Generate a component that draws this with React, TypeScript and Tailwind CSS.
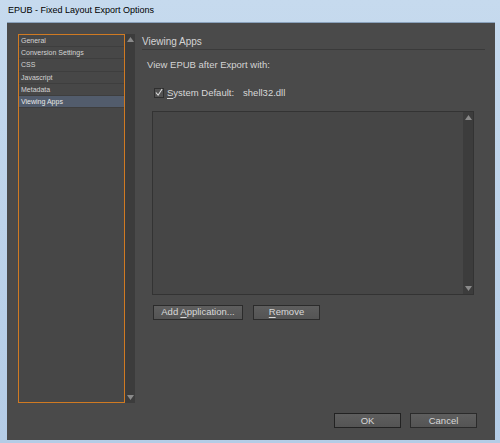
import React from 'react';

const navItems = ['General', 'Conversion Settings', 'CSS', 'Javascript', 'Metadata', 'Viewing Apps'];

function Arrow({ dir }: { dir: 'up' | 'down' }) {
  return (
    <svg width="7" height="5" viewBox="0 0 7 5" className="block">
      {dir === 'up' ? <polygon points="0,5 7,5 3.5,0" fill="#8a8a8a" /> : <polygon points="0,0 7,0 3.5,5" fill="#8a8a8a" />}
    </svg>
  );
}

function ScrollTrack({ className }: { className: string }) {
  return (
    <div className={`flex flex-col items-center justify-between bg-[#3c3c3c] py-[3px] ${className}`}>
      <Arrow dir="up" />
      <Arrow dir="down" />
    </div>
  );
}

function Button({ children, className }: { children: React.ReactNode; className: string }) {
  return (
    <div
      className={`flex h-[15px] items-center justify-center border border-[#2b2b2b] bg-gradient-to-b from-[#5e5e5e] to-[#545454] text-[9.5px] leading-none text-[#d8d8d8] ${className}`}
    >
      <span>{children}</span>
    </div>
  );
}

export default function App() {
  return (
    <div
      className="flex h-[443px] w-[500px] flex-col bg-gradient-to-b from-[#c6daee] to-[#b4cce6] pl-[7px] pr-[5px] pb-[3px]"
      style={{ fontFamily: '"Liberation Sans", Arial, sans-serif' }}
    >
      {/* Title bar */}
      <div className="flex h-[22px] items-center pl-[1px] text-[9px] text-black">
        EPUB - Fixed Layout Export Options
      </div>

      {/* Dialog body */}
      <div className="flex flex-1 flex-col border-t border-[#8aa2bc] bg-[#4a4a4a] pl-[11px] pr-[10px] pt-[11px] pb-[12px]">
        <div className="flex h-[369px]">
          {/* Category list */}
          <div className="flex w-[117px]">
            <div className="flex w-[107px] flex-col border border-[#d07a22] bg-[#474747]">
              {navItems.map((item) => (
                <div
                  key={item}
                  className={`flex h-[12.2px] items-center border-b border-[#3e3e3e] pl-[2px] text-[7px] leading-none ${
                    item === 'Viewing Apps' ? 'bg-[#525c6c] text-[#e8e8e8]' : 'text-[#d4d4d4]'
                  }`}
                >
                  {item}
                </div>
              ))}
            </div>
            <ScrollTrack className="w-[10px]" />
          </div>

          {/* Viewing Apps panel */}
          <div className="ml-[7px] flex flex-1 flex-col">
            <div className="flex h-[16px] items-center border-b border-[#3a3a3a] text-[10px] text-[#d4d4d4]">
              Viewing Apps
            </div>
            <div className="mt-[10px] pl-[5px] text-[9.5px] leading-none text-[#d4d4d4]">View EPUB after Export with:</div>
            <div className="mt-[18px] flex items-center pl-[12px] text-[9.5px] leading-none text-[#d8d8d8]">
              <div className="flex h-[10px] w-[10px] items-center justify-center border border-[#2f2f2f] bg-[#525252]">
                <svg width="9" height="9" viewBox="0 0 9 9">
                  <path d="M1 4.5 L3.5 7.5 L8 0.5" stroke="#e0e0e0" strokeWidth="1.2" fill="none" />
                </svg>
              </div>
              <span className="ml-[3px]">
                <span className="underline underline-offset-2">S</span>ystem Default:
              </span>
              <span className="ml-[9px]">shell32.dll</span>
            </div>
            <div className="ml-[10px] mr-[11px] mt-[13px] flex h-[184px] border border-[#333333] bg-[#464646]">
              <div className="flex-1" />
              <ScrollTrack className="w-[10px]" />
            </div>
            <div className="ml-[11px] mt-[10px] flex gap-[10px]">
              <Button className="w-[90px]">
                Add <span className="underline underline-offset-2">A</span>pplication...
              </Button>
              <Button className="w-[67px]">
                <span className="underline underline-offset-2">R</span>emove
              </Button>
            </div>
          </div>
        </div>

        {/* Footer buttons */}
        <div className="mt-auto mr-[8px] flex justify-end gap-[9px]">
          <Button className="w-[67px] border-[#222222]">OK</Button>
          <Button className="w-[67px]">Cancel</Button>
        </div>
      </div>
    </div>
  );
}
